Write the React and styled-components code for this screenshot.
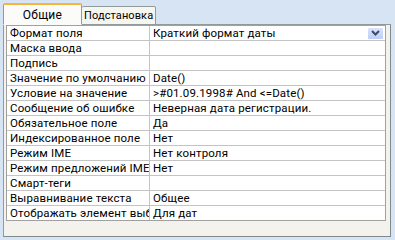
import React from 'react';
import styled, { createGlobalStyle } from 'styled-components';

const GlobalStyle = createGlobalStyle`
  body {
    margin: 0;
    background: #d6e4f4;
    font-family: Roboto, "Liberation Sans", sans-serif;
  }
`;

const rows = [
  ['Формат поля', 'Краткий формат даты', true],
  ['Маска ввода', ''],
  ['Подпись', ''],
  ['Значение по умолчанию', 'Date()'],
  ['Условие на значение', '>#01.09.1998# And <=Date()'],
  ['Сообщение об ошибке', 'Неверная дата регистрации.'],
  ['Обязательное поле', 'Да'],
  ['Индексированное поле', 'Нет'],
  ['Режим IME', 'Нет контроля'],
  ['Режим предложений IME', 'Нет'],
  ['Смарт-теги', ''],
  ['Выравнивание текста', 'Общее'],
  ['Отображать элемент выбора даты', 'Для дат'],
];

const Chevron = () => (
  <svg width="9" height="6" viewBox="0 0 9 6">
    <path d="M1 1 L4.5 4.5 L8 1" fill="none" stroke="#3b4a6b" strokeWidth="2" />
  </svg>
);

const App = () => (
  <Window>
    <GlobalStyle />
    <TabStrip>
      <Tab active>Общие</Tab>
      <Tab>Подстановка</Tab>
    </TabStrip>
    <Panel>
      <Grid>
        {rows.map(([label, value, combo]) => (
          <Row key={label}>
            <Label>{label}</Label>
            <Value>
              <span>{value}</span>
              {combo ? <DropButton><Chevron /></DropButton> : null}
            </Value>
          </Row>
        ))}
      </Grid>
    </Panel>
  </Window>
);

const Window = styled.div`
  width: 388px;
  padding: 3px 0 0 3px;
`;

const TabStrip = styled.div`
  display: flex;
  align-items: flex-end;
  height: 22px;
  position: relative;
  z-index: 1;
  margin-bottom: -1px;
`;

const Tab = styled.div`
  box-sizing: border-box;
  height: ${p => (p.active ? '22px' : '19px')};
  width: ${p => (p.active ? '79px' : 'auto')};
  padding: ${p => (p.active ? '1px 0 0' : '0 2px')};
  display: flex;
  align-items: center;
  justify-content: center;
  font-size: ${p => (p.active ? '12px' : '11px')};
  letter-spacing: ${p => (p.active ? '0.3px' : '0.1px')};
  white-space: nowrap;
  color: #000;
  background: ${p => (p.active ? '#fbfbf9' : '#f6f6f0')};
  border: 1px solid #919b9c;
  border-top: ${p => (p.active ? '2px solid #f5b43c' : '1px solid #919b9c')};
  border-bottom: ${p => (p.active ? '1px solid #fbfbf9' : '1px solid #919b9c')};
  border-radius: 2px 2px 0 0;
  & + & {
    border-left: none;
  }
`;

const Panel = styled.div`
  box-sizing: border-box;
  height: 213px;
  background: #f3f2ed;
  border: 1px solid #919b9c;
  border-right-color: #7f8a8c;
  border-bottom-color: #7f8a8c;
  padding: 0 4px 0 2px;
`;

const Grid = styled.div`
  background: #fff;
  border: 1px solid #a0a0a0;
  border-top: none;
`;

const Row = styled.div`
  box-sizing: border-box;
  display: grid;
  grid-template-columns: 143px 1fr;
  height: 15px;
  border-top: 1px solid #c4c4c4;
  &:first-child {
    border-top-color: #a0a0a0;
  }
`;

const Label = styled.div`
  font-size: 11.5px;
  letter-spacing: 0.15px;
  line-height: 14px;
  padding-left: 3px;
  white-space: nowrap;
  overflow: hidden;
  border-right: 1px solid #c4c4c4;
  color: #000;
`;

const Value = styled.div`
  display: flex;
  align-items: center;
  justify-content: space-between;
  font-size: 11.5px;
  letter-spacing: 0.15px;
  line-height: 14px;
  padding-left: 3px;
  white-space: nowrap;
  overflow: hidden;
  color: #000;
`;

const DropButton = styled.div`
  width: 15px;
  height: 11px;
  margin-right: 2px;
  display: flex;
  align-items: center;
  justify-content: center;
  background: linear-gradient(#dbe4fb, #bccdf5);
  border-radius: 1px;
`;

export default App;
